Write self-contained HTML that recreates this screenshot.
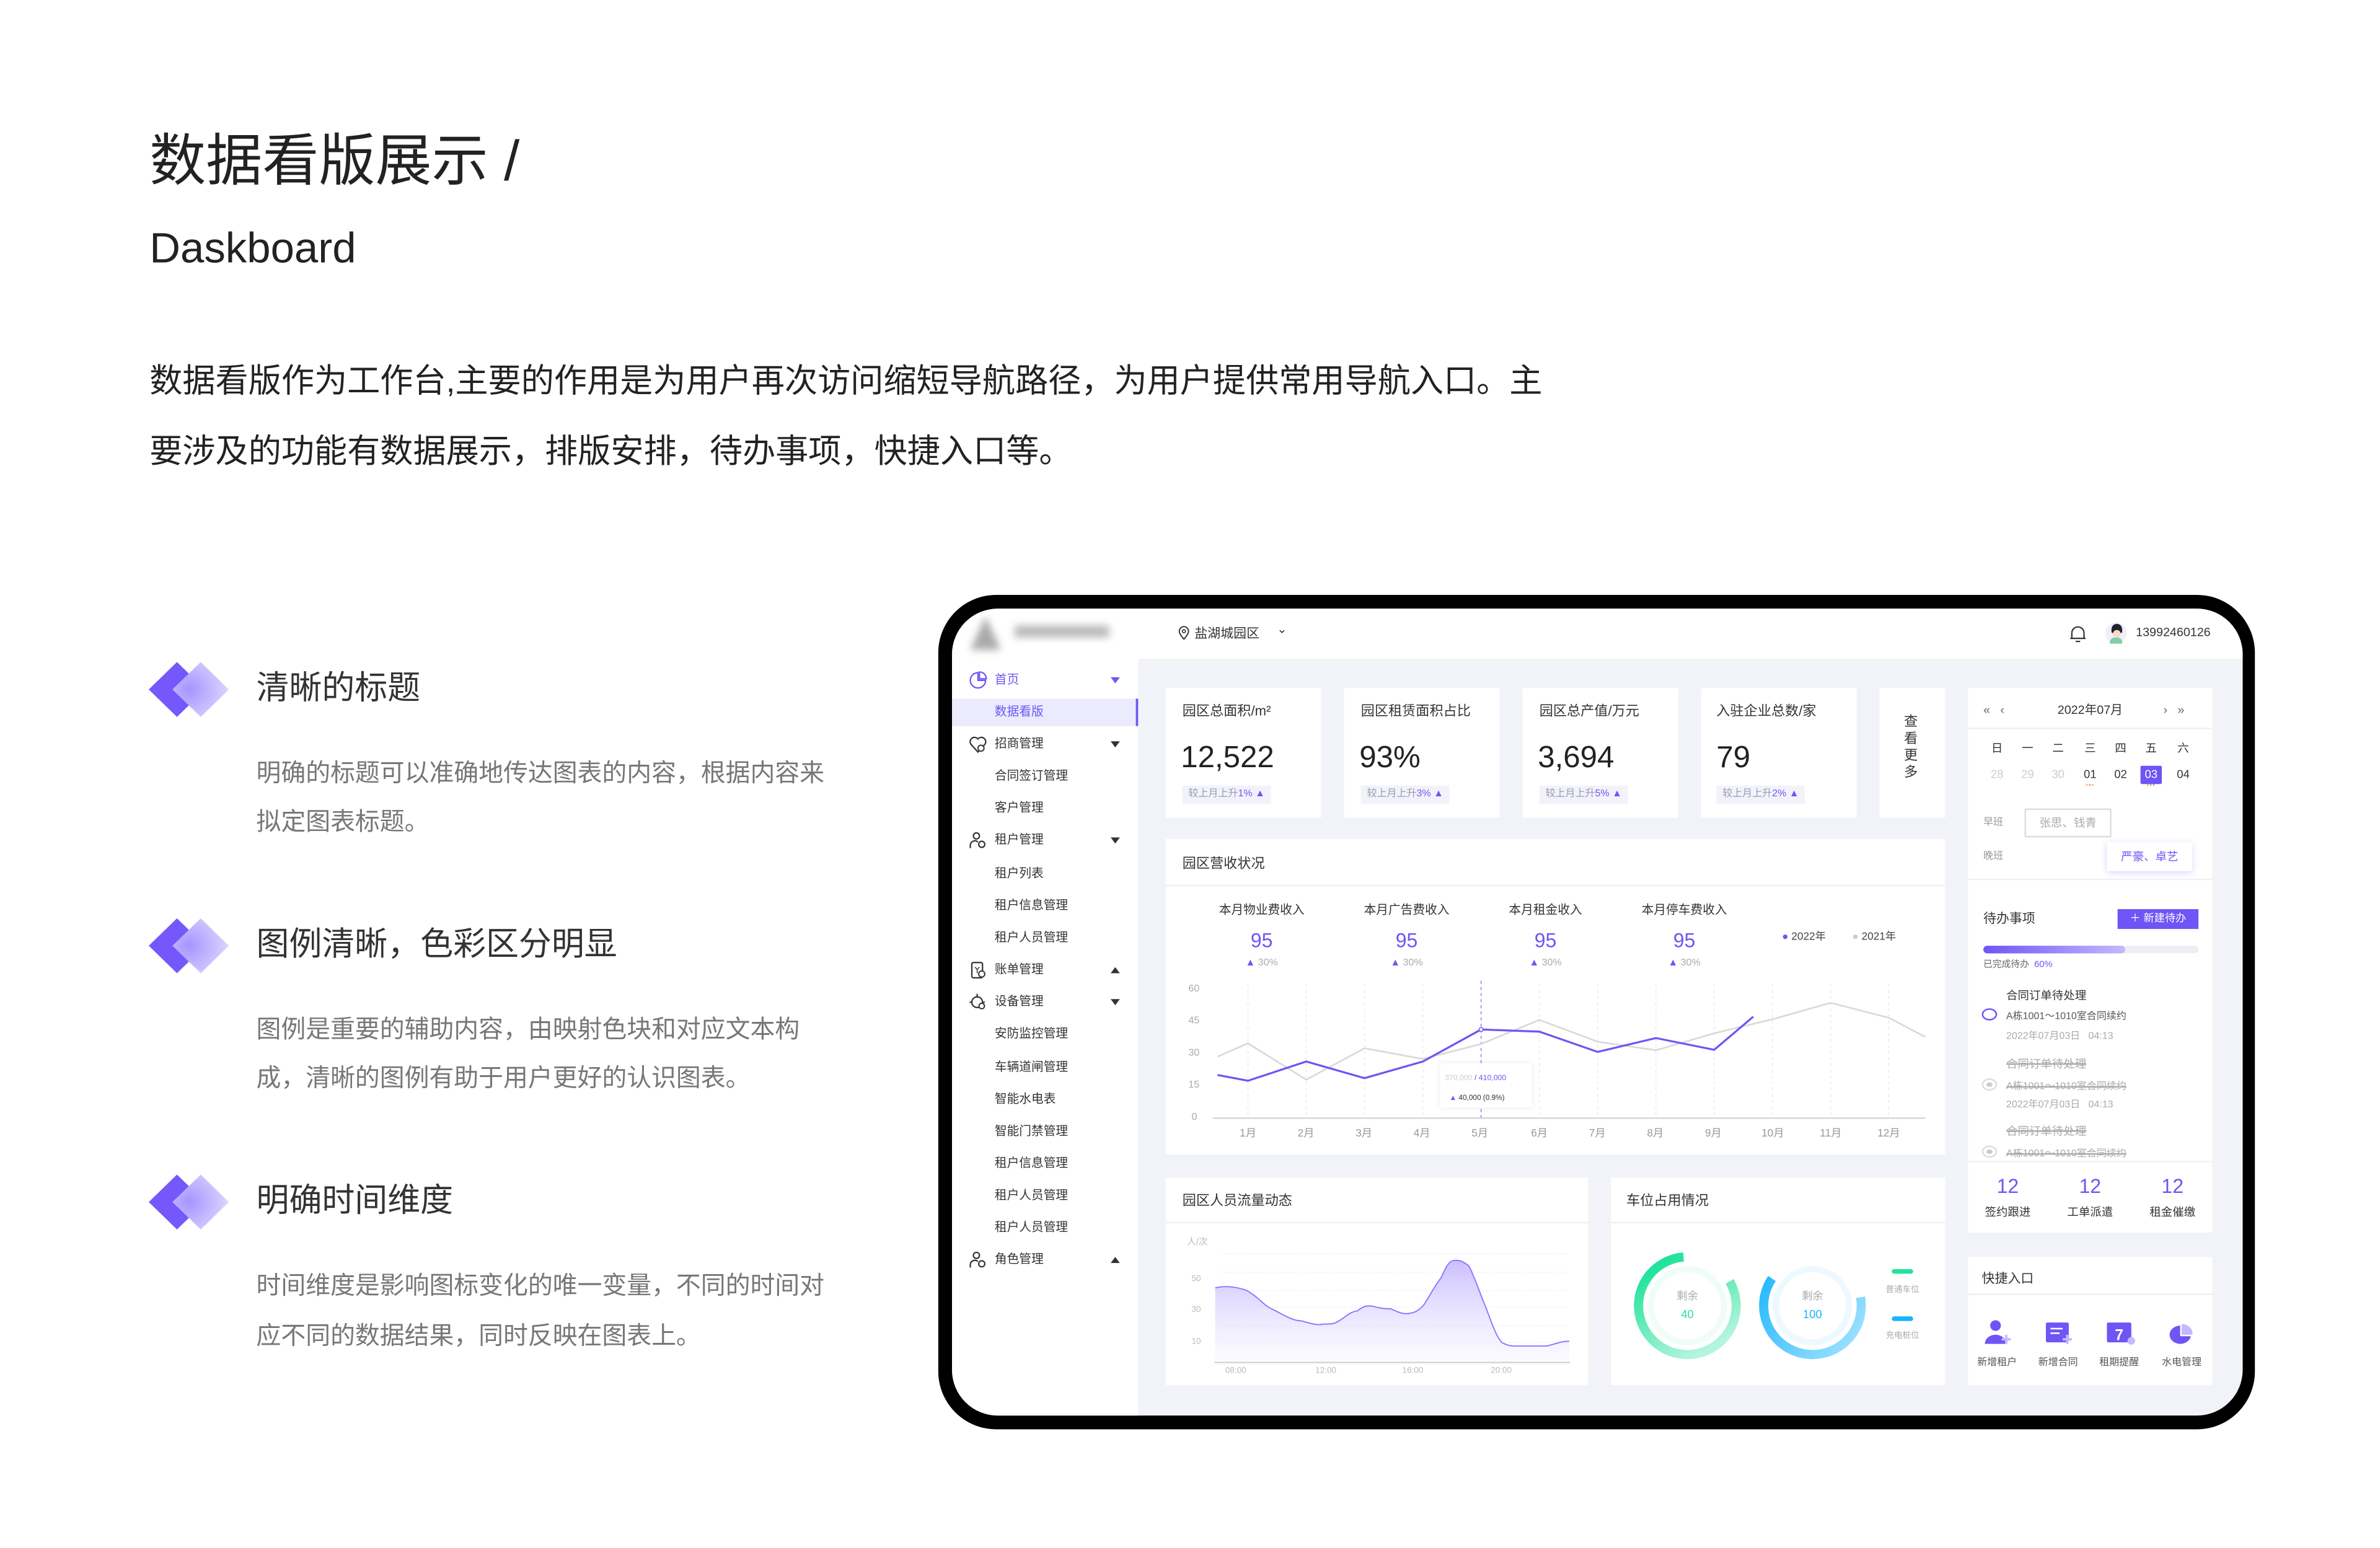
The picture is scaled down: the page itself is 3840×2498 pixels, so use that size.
<!DOCTYPE html>
<html><head><meta charset="utf-8">
<style>
*{margin:0;padding:0;box-sizing:border-box}
html,body{width:3840px;height:2498px;overflow:hidden;background:#fff}
body{font-family:"Liberation Sans","Noto Sans CJK SC",sans-serif;color:#333}
#w{position:absolute;left:0;top:0;width:1560px;height:1015px;transform:scale(2.461538);transform-origin:0 0}
.t{position:absolute;white-space:nowrap}
.c{transform:translateX(-50%)}
.card{position:absolute;background:#fff}
.sb{position:absolute;left:652px;font-size:8px;line-height:10px;color:#333}
.ar{position:absolute;left:728px;width:0;height:0;border-left:3px solid transparent;border-right:3px solid transparent}
.dn{border-top:4px solid #333}
.up{border-bottom:4px solid #333}
.badge{position:absolute;height:12px;background:#f2f2fa;font-size:6.5px;line-height:12px;color:#9a9ab0;padding:0 4px}
.badge b{color:#6e55f5;font-weight:normal}
.ft{position:absolute;left:168px;font-size:21.5px;line-height:26px;color:#333;white-space:nowrap}
.fd{position:absolute;left:168px;font-size:16.2px;line-height:20px;color:#777;white-space:nowrap}
</style></head><body>
<div id="w">
<div class="t" style="left:98px;top:84px;font-size:37px;line-height:44px;color:#222">数据看版展示 /</div>
<div class="t" style="left:98px;top:146px;font-size:28px;line-height:34px;color:#222">Daskboard</div>
<div class="t" style="left:98px;top:237px;font-size:21.6px;line-height:26px;color:#222">数据看版作为工作台,主要的作用是为用户再次访问缩短导航路径，为用户提供常用导航入口。主</div>
<div class="t" style="left:98px;top:283px;font-size:21.6px;line-height:26px;color:#222">要涉及的功能有数据展示，排版安排，待办事项，快捷入口等。</div>

<div class="ft" style="top:438px">清晰的标题</div>
<div class="fd" style="top:497px">明确的标题可以准确地传达图表的内容，根据内容来</div>
<div class="fd" style="top:529px">拟定图表标题。</div>
<div class="ft" style="top:606px">图例清晰，色彩区分明显</div>
<div class="fd" style="top:665px">图例是重要的辅助内容，由映射色块和对应文本构</div>
<div class="fd" style="top:697px">成，清晰的图例有助于用户更好的认识图表。</div>
<div class="ft" style="top:774px">明确时间维度</div>
<div class="fd" style="top:833px">时间维度是影响图标变化的唯一变量，不同的时间对</div>
<div class="fd" style="top:866px">应不同的数据结果，同时反映在图表上。</div>

<svg style="position:absolute;left:0;top:0" width="1560" height="1015" viewBox="0 0 1560 1015">
<defs>
<radialGradient id="dg" cx="0.3" cy="0.5" r="0.9"><stop offset="0" stop-color="#a595ff"/><stop offset="1" stop-color="#ece8ff"/></radialGradient>
</defs>
<g>
<polygon points="116,434 134.5,452 116,470 97.5,452" fill="#7558fb"/>
<polygon points="131.6,434 150,452 131.6,470 113,452" fill="url(#dg)"/>
<polygon points="116,602 134.5,620 116,638 97.5,620" fill="#7558fb"/>
<polygon points="131.6,602 150,620 131.6,638 113,620" fill="url(#dg)"/>
<polygon points="116,770 134.5,788 116,806 97.5,788" fill="#7558fb"/>
<polygon points="131.6,770 150,788 131.6,806 113,788" fill="url(#dg)"/>
</g>
<rect x="615" y="390" width="863" height="547" rx="38" fill="#000"/>
<rect x="624" y="399" width="846" height="529" rx="30" fill="#f2f3f8"/>
<path d="M654 399 H1440 A30 30 0 0 1 1470 429 V432 H624 V429 A30 30 0 0 1 654 399Z" fill="#fff"/>
<path d="M624 432 H746 V928 H654 A30 30 0 0 1 624 898Z" fill="#fff"/>
<rect x="624" y="458" width="122" height="18" fill="#ecebfd"/>
<rect x="744.5" y="458" width="1.5" height="18" fill="#6e55f5"/>
<g style="filter:blur(2.5px)"><polygon points="646,404 656,426 636,426" fill="#aaa"/><rect x="665" y="410" width="62" height="8" fill="#bbb"/></g>
</svg>

<svg class="t" style="left:772px;top:410px" width="8" height="10" viewBox="0 0 8 10"><path d="M4 9 C1 5.5 1 4.5 1 3.8 A3 3 0 0 1 7 3.8 C7 4.5 7 5.5 4 9Z" fill="none" stroke="#333" stroke-width="0.8"/><circle cx="4" cy="3.8" r="1" fill="none" stroke="#333" stroke-width="0.7"/></svg>
<div class="t" style="left:783px;top:410px;font-size:8.5px;line-height:10px">盐湖城园区</div>
<div class="t" style="left:837px;top:408px;font-size:8px;line-height:10px">⌄</div>
<svg class="t" style="left:1356px;top:409px" width="12" height="13" viewBox="0 0 12 13"><path d="M2 9.5 V6 A4 4 0 0 1 10 6 V9.5 Z M1 9.5 H11 M4.5 11.5 H7.5" fill="none" stroke="#333" stroke-width="0.9"/></svg>
<div class="t" style="left:1380px;top:408px;width:14px;height:14px;border-radius:50%;background:#eef0f5"></div>
<div class="t" style="left:1383.5px;top:409px;width:7px;height:6px;border-radius:4px 4px 1px 1px;background:#223"></div>
<div class="t" style="left:1384.5px;top:413px;width:5px;height:5px;border-radius:50%;background:#fcd9c3"></div>
<div class="t" style="left:1383px;top:418px;width:8px;height:4px;border-radius:3px 3px 0 0;background:#7ccfa6"></div>
<div class="t" style="left:1400px;top:410px;font-size:8px;line-height:10px;color:#333">13992460126</div>

<svg class="t" style="left:635px;top:440px" width="12" height="12" viewBox="0 0 12 12"><path d="M6 1 A5 5 0 1 0 11 6 H6Z" fill="none" stroke="#6e55f5" stroke-width="0.9"/><path d="M7 0.5 V5 H11.5 A4.5 4.5 0 0 0 7 0.5Z" fill="none" stroke="#6e55f5" stroke-width="0.9"/></svg>
<div class="sb" style="top:441px;color:#6e55f5">首页</div><div class="ar" style="top:444px;border-top:4px solid #6e55f5"></div>
<div class="sb" style="top:462px;color:#6e55f5">数据看版</div>
<svg class="t" style="left:635px;top:482px" width="12" height="12" viewBox="0 0 12 12"><path d="M6 11 L1.5 6 A2.8 2.8 0 0 1 6 2.5 A2.8 2.8 0 0 1 10.5 6Z" fill="none" stroke="#333" stroke-width="0.9"/><circle cx="8" cy="8.5" r="2" fill="#fff" stroke="#333" stroke-width="0.8"/></svg>
<div class="sb" style="top:483px">招商管理</div><div class="ar dn" style="top:486px"></div>
<div class="sb" style="top:504px">合同签订管理</div>
<div class="sb" style="top:525px">客户管理</div>
<svg class="t" style="left:635px;top:545px" width="12" height="12" viewBox="0 0 12 12"><circle cx="5" cy="3" r="2" fill="none" stroke="#333" stroke-width="0.9"/><path d="M1 11 V9 A3 3 0 0 1 6 7" fill="none" stroke="#333" stroke-width="0.9"/><circle cx="8.5" cy="8.5" r="2" fill="none" stroke="#333" stroke-width="0.9"/></svg>
<div class="sb" style="top:546px">租户管理</div><div class="ar dn" style="top:549px"></div>
<div class="sb" style="top:568px">租户列表</div>
<div class="sb" style="top:589px">租户信息管理</div>
<div class="sb" style="top:610px">租户人员管理</div>
<svg class="t" style="left:635px;top:630px" width="12" height="12" viewBox="0 0 12 12"><rect x="2" y="1" width="7" height="10" rx="1" fill="none" stroke="#333" stroke-width="0.9"/><circle cx="8.5" cy="8.5" r="2" fill="#fff" stroke="#333" stroke-width="0.8"/><path d="M4 4 L5.5 5.5 L7 4 M5.5 5.5 V8" fill="none" stroke="#333" stroke-width="0.6"/></svg>
<div class="sb" style="top:631px">账单管理</div><div class="ar up" style="top:634px"></div>
<svg class="t" style="left:635px;top:651px" width="12" height="12" viewBox="0 0 12 12"><circle cx="5.5" cy="6" r="3.5" fill="none" stroke="#333" stroke-width="0.9"/><path d="M5.5 0.5 V3 M0.5 6 H2 M9 6 H10.5" stroke="#333" stroke-width="0.9"/><circle cx="8.5" cy="8.5" r="1.8" fill="#fff" stroke="#333" stroke-width="0.8"/></svg>
<div class="sb" style="top:652px">设备管理</div><div class="ar dn" style="top:655px"></div>
<div class="sb" style="top:673px">安防监控管理</div>
<div class="sb" style="top:695px">车辆道闸管理</div>
<div class="sb" style="top:716px">智能水电表</div>
<div class="sb" style="top:737px">智能门禁管理</div>
<div class="sb" style="top:758px">租户信息管理</div>
<div class="sb" style="top:779px">租户人员管理</div>
<div class="sb" style="top:800px">租户人员管理</div>
<svg class="t" style="left:635px;top:820px" width="12" height="12" viewBox="0 0 12 12"><circle cx="5" cy="3" r="2" fill="none" stroke="#333" stroke-width="0.9"/><path d="M1 11 V9 A3 3 0 0 1 6 7" fill="none" stroke="#333" stroke-width="0.9"/><circle cx="8.5" cy="8.5" r="2" fill="none" stroke="#333" stroke-width="0.9"/></svg>
<div class="sb" style="top:821px">角色管理</div><div class="ar up" style="top:824px"></div>

<div class="card" style="left:764px;top:451px;width:102px;height:85px"></div>
<div class="card" style="left:881px;top:451px;width:102px;height:85px"></div>
<div class="card" style="left:998px;top:451px;width:102px;height:85px"></div>
<div class="card" style="left:1115px;top:451px;width:102px;height:85px"></div>
<div class="card" style="left:1232px;top:451px;width:43px;height:85px"></div>
<div class="t" style="left:775px;top:461px;font-size:9px;line-height:11px">园区总面积/m²</div>
<div class="t" style="left:892px;top:461px;font-size:9px;line-height:11px">园区租赁面积占比</div>
<div class="t" style="left:1009px;top:461px;font-size:9px;line-height:11px">园区总产值/万元</div>
<div class="t" style="left:1125px;top:461px;font-size:9px;line-height:11px">入驻企业总数/家</div>
<div class="t" style="left:774px;top:485px;font-size:20px;line-height:24px;color:#222">12,522</div>
<div class="t" style="left:891px;top:485px;font-size:20px;line-height:24px;color:#222">93%</div>
<div class="t" style="left:1008px;top:485px;font-size:20px;line-height:24px;color:#222">3,694</div>
<div class="t" style="left:1125px;top:485px;font-size:20px;line-height:24px;color:#222">79</div>
<div class="badge" style="left:775px;top:515px">较上月上升<b>1%</b> <b>▲</b></div>
<div class="badge" style="left:892px;top:515px">较上月上升<b>3%</b> <b>▲</b></div>
<div class="badge" style="left:1009px;top:515px">较上月上升<b>5%</b> <b>▲</b></div>
<div class="badge" style="left:1125px;top:515px">较上月上升<b>2%</b> <b>▲</b></div>
<div class="t" style="left:1248px;top:468px;font-size:9px;line-height:11px;width:10px;white-space:normal">查看更多</div>

<div class="card" style="left:764px;top:550px;width:511px;height:207px"></div>
<div class="t" style="left:764px;top:580px;width:511px;height:1px;background:#f0f0f4"></div>
<div class="t" style="left:775px;top:561px;font-size:9px;line-height:11px">园区营收状况</div>
<div class="t c" style="left:827px;top:592px;font-size:8px;line-height:10px">本月物业费收入</div>
<div class="t c" style="left:922px;top:592px;font-size:8px;line-height:10px">本月广告费收入</div>
<div class="t c" style="left:1013px;top:592px;font-size:8px;line-height:10px">本月租金收入</div>
<div class="t c" style="left:1104px;top:592px;font-size:8px;line-height:10px">本月停车费收入</div>
<div class="t c" style="left:827px;top:609px;font-size:13px;line-height:15px;color:#6e55f5">95</div>
<div class="t c" style="left:922px;top:609px;font-size:13px;line-height:15px;color:#6e55f5">95</div>
<div class="t c" style="left:1013px;top:609px;font-size:13px;line-height:15px;color:#6e55f5">95</div>
<div class="t c" style="left:1104px;top:609px;font-size:13px;line-height:15px;color:#6e55f5">95</div>
<div class="t c" style="left:827px;top:628px;font-size:6.5px;line-height:8px;color:#aaa"><span style="color:#6e55f5">▲</span> 30%</div>
<div class="t c" style="left:922px;top:628px;font-size:6.5px;line-height:8px;color:#aaa"><span style="color:#6e55f5">▲</span> 30%</div>
<div class="t c" style="left:1013px;top:628px;font-size:6.5px;line-height:8px;color:#aaa"><span style="color:#6e55f5">▲</span> 30%</div>
<div class="t c" style="left:1104px;top:628px;font-size:6.5px;line-height:8px;color:#aaa"><span style="color:#6e55f5">▲</span> 30%</div>
<div class="t" style="left:1168px;top:610px;font-size:7px;line-height:9px;color:#444"><span style="color:#6e55f5">●</span> 2022年</div>
<div class="t" style="left:1214px;top:610px;font-size:7px;line-height:9px;color:#444"><span style="color:#ccc">●</span> 2021年</div>
<div class="t" style="left:779px;top:645px;font-size:6.5px;line-height:8px;color:#aaa">60</div>
<div class="t" style="left:779px;top:666px;font-size:6.5px;line-height:8px;color:#aaa">45</div>
<div class="t" style="left:779px;top:687px;font-size:6.5px;line-height:8px;color:#aaa">30</div>
<div class="t" style="left:779px;top:708px;font-size:6.5px;line-height:8px;color:#aaa">15</div>
<div class="t" style="left:781px;top:729px;font-size:6.5px;line-height:8px;color:#aaa">0</div>
<div class="t c" style="left:818px;top:739px;font-size:7px;line-height:9px;color:#999">1月</div>
<div class="t c" style="left:856px;top:739px;font-size:7px;line-height:9px;color:#999">2月</div>
<div class="t c" style="left:894px;top:739px;font-size:7px;line-height:9px;color:#999">3月</div>
<div class="t c" style="left:932px;top:739px;font-size:7px;line-height:9px;color:#999">4月</div>
<div class="t c" style="left:970px;top:739px;font-size:7px;line-height:9px;color:#999">5月</div>
<div class="t c" style="left:1009px;top:739px;font-size:7px;line-height:9px;color:#999">6月</div>
<div class="t c" style="left:1047px;top:739px;font-size:7px;line-height:9px;color:#999">7月</div>
<div class="t c" style="left:1085px;top:739px;font-size:7px;line-height:9px;color:#999">8月</div>
<div class="t c" style="left:1123px;top:739px;font-size:7px;line-height:9px;color:#999">9月</div>
<div class="t c" style="left:1162px;top:739px;font-size:7px;line-height:9px;color:#999">10月</div>
<div class="t c" style="left:1200px;top:739px;font-size:7px;line-height:9px;color:#999">11月</div>
<div class="t c" style="left:1238px;top:739px;font-size:7px;line-height:9px;color:#999">12月</div>

<div class="card" style="left:764px;top:772px;width:277px;height:136px"></div>
<div class="card" style="left:1056px;top:772px;width:219px;height:136px"></div>
<div class="t" style="left:764px;top:801px;width:277px;height:1px;background:#f0f0f4"></div>
<div class="t" style="left:1056px;top:801px;width:219px;height:1px;background:#f0f0f4"></div>
<div class="t" style="left:775px;top:782px;font-size:9px;line-height:11px">园区人员流量动态</div>
<div class="t" style="left:1066px;top:782px;font-size:9px;line-height:11px">车位占用情况</div>
<div class="t" style="left:778px;top:811px;font-size:6px;line-height:8px;color:#bbb">人/次</div>
<div class="t" style="left:781px;top:836px;font-size:5.5px;line-height:7px;color:#bbb">50</div>
<div class="t" style="left:781px;top:856px;font-size:5.5px;line-height:7px;color:#bbb">30</div>
<div class="t" style="left:781px;top:877px;font-size:5.5px;line-height:7px;color:#bbb">10</div>
<div class="t c" style="left:810px;top:896px;font-size:5.5px;line-height:7px;color:#bbb">08:00</div>
<div class="t c" style="left:869px;top:896px;font-size:5.5px;line-height:7px;color:#bbb">12:00</div>
<div class="t c" style="left:926px;top:896px;font-size:5.5px;line-height:7px;color:#bbb">16:00</div>
<div class="t c" style="left:984px;top:896px;font-size:5.5px;line-height:7px;color:#bbb">20:00</div>

<div class="card" style="left:1290px;top:451px;width:160px;height:357px"></div>
<div class="card" style="left:1290px;top:824px;width:160px;height:84px"></div>
<div class="t" style="left:1300px;top:461px;font-size:8px;line-height:10px;color:#666">«&nbsp;&nbsp;&nbsp;‹</div>
<div class="t c" style="left:1370px;top:461px;font-size:8px;line-height:10px;color:#333">2022年07月</div>
<div class="t" style="left:1418px;top:461px;font-size:8px;line-height:10px;color:#666">›&nbsp;&nbsp;&nbsp;»</div>
<div class="t" style="left:1290px;top:477px;width:160px;height:1px;background:#f0f0f4"></div>
<div class="t c" style="left:1309px;top:486px;font-size:7.5px;line-height:10px">日</div>
<div class="t c" style="left:1329px;top:486px;font-size:7.5px;line-height:10px">一</div>
<div class="t c" style="left:1349px;top:486px;font-size:7.5px;line-height:10px">二</div>
<div class="t c" style="left:1370px;top:486px;font-size:7.5px;line-height:10px">三</div>
<div class="t c" style="left:1390px;top:486px;font-size:7.5px;line-height:10px">四</div>
<div class="t c" style="left:1410px;top:486px;font-size:7.5px;line-height:10px">五</div>
<div class="t c" style="left:1431px;top:486px;font-size:7.5px;line-height:10px">六</div>
<div class="t c" style="left:1309px;top:503px;font-size:7.5px;line-height:10px;color:#ccc">28</div>
<div class="t c" style="left:1329px;top:503px;font-size:7.5px;line-height:10px;color:#ccc">29</div>
<div class="t c" style="left:1349px;top:503px;font-size:7.5px;line-height:10px;color:#ccc">30</div>
<div class="t c" style="left:1370px;top:503px;font-size:7.5px;line-height:10px">01</div>
<div class="t c" style="left:1390px;top:503px;font-size:7.5px;line-height:10px">02</div>
<div class="t" style="left:1403px;top:502px;width:14px;height:12px;background:#6e55f5;border-radius:1px"></div>
<div class="t c" style="left:1410px;top:503px;font-size:7.5px;line-height:10px;color:#fff">03</div>
<div class="t c" style="left:1431px;top:503px;font-size:7.5px;line-height:10px">04</div>
<div class="t c" style="left:1370px;top:513px;font-size:4px;line-height:4px;letter-spacing:0.5px"><span style="color:#f5a623">•</span><span style="color:#ff5fb0">•</span><span style="color:#f5a623">•</span></div>
<div class="t c" style="left:1410px;top:513px;font-size:4px;line-height:4px;letter-spacing:0.5px"><span style="color:#f5a623">•</span><span style="color:#7ed321">•</span><span style="color:#ff5fb0">•</span></div>
<div class="t" style="left:1300px;top:536px;font-size:6.5px;line-height:8px;color:#999">早班</div>
<div class="t" style="left:1327px;top:530px;width:57px;height:19px;border:1px solid #ddd;border-radius:1px;font-size:7.5px;line-height:17px;text-align:center;color:#aaa">张思、钱青</div>
<div class="t" style="left:1300px;top:558px;font-size:6.5px;line-height:8px;color:#999">晚班</div>
<div class="t" style="left:1381px;top:552px;width:56px;height:19px;background:#fff;box-shadow:0 1px 4px rgba(110,85,245,0.25);font-size:7.5px;line-height:19px;text-align:center;color:#6e55f5">严豪、卓艺</div>
<div class="t" style="left:1290px;top:576px;width:160px;height:1px;background:#f0f0f4"></div>
<div class="t" style="left:1300px;top:597px;font-size:8.5px;line-height:10px;color:#333">待办事项</div>
<div class="t" style="left:1388px;top:596px;width:53px;height:13px;background:#6e55f5;color:#fff;font-size:7px;line-height:13px;text-align:center">＋ 新建待办</div>
<div class="t" style="left:1300px;top:620px;width:141px;height:5px;border-radius:3px;background:#eeeef4"></div>
<div class="t" style="left:1300px;top:620px;width:93px;height:5px;border-radius:3px;background:linear-gradient(90deg,#6e55f5,#c5b8ff)"></div>
<div class="t" style="left:1300px;top:629px;font-size:6px;line-height:8px;color:#666">已完成待办&nbsp;&nbsp;<span style="color:#6e55f5">60%</span></div>
<div class="t" style="left:1315px;top:648px;font-size:7.5px;line-height:10px">合同订单待处理</div>
<div class="t" style="left:1299px;top:661px;width:10px;height:8px;border:1px solid #6e55f5;border-radius:50%"></div>
<div class="t" style="left:1315px;top:663px;font-size:6.5px;line-height:8px;color:#555">A栋1001～1010室合同续约</div>
<div class="t" style="left:1315px;top:676px;font-size:6.5px;line-height:8px;color:#aaa">2022年07月03日&nbsp;&nbsp;&nbsp;04:13</div>
<div class="t" style="left:1315px;top:693px;font-size:7.5px;line-height:10px;color:#aaa;text-decoration:line-through">合同订单待处理</div>
<div class="t" style="left:1299px;top:707px;width:10px;height:8px;border:1px solid #ddd;border-radius:50%;background:radial-gradient(#ccc 30%,#fff 40%)"></div>
<div class="t" style="left:1315px;top:709px;font-size:6.5px;line-height:8px;color:#aaa;text-decoration:line-through">A栋1001～1010室合同续约</div>
<div class="t" style="left:1315px;top:721px;font-size:6.5px;line-height:8px;color:#aaa">2022年07月03日&nbsp;&nbsp;&nbsp;04:13</div>
<div class="t" style="left:1315px;top:737px;font-size:7.5px;line-height:10px;color:#aaa;text-decoration:line-through">合同订单待处理</div>
<div class="t" style="left:1299px;top:751px;width:10px;height:8px;border:1px solid #ddd;border-radius:50%;background:radial-gradient(#ccc 30%,#fff 40%)"></div>
<div class="t" style="left:1315px;top:753px;height:7px;overflow:hidden;font-size:6.5px;line-height:8px;color:#aaa;text-decoration:line-through">A栋1001～1010室合同续约</div>
<div class="t" style="left:1290px;top:761px;width:160px;height:1px;background:#f0f0f4"></div>
<div class="t c" style="left:1316px;top:770px;font-size:13px;line-height:15px;color:#6e55f5">12</div>
<div class="t c" style="left:1370px;top:770px;font-size:13px;line-height:15px;color:#6e55f5">12</div>
<div class="t c" style="left:1424px;top:770px;font-size:13px;line-height:15px;color:#6e55f5">12</div>
<div class="t c" style="left:1316px;top:790px;font-size:7.5px;line-height:10px">签约跟进</div>
<div class="t c" style="left:1370px;top:790px;font-size:7.5px;line-height:10px">工单派遣</div>
<div class="t c" style="left:1424px;top:790px;font-size:7.5px;line-height:10px">租金催缴</div>
<div class="t" style="left:1299px;top:833px;font-size:8.5px;line-height:10px">快捷入口</div>
<div class="t" style="left:1290px;top:848px;width:160px;height:1px;background:#f0f0f4"></div>
<div class="t c" style="left:1309px;top:890px;font-size:6.5px;line-height:8px;color:#555">新增租户</div>
<div class="t c" style="left:1349px;top:890px;font-size:6.5px;line-height:8px;color:#555">新增合同</div>
<div class="t c" style="left:1389px;top:890px;font-size:6.5px;line-height:8px;color:#555">租期提醒</div>
<div class="t c" style="left:1430px;top:890px;font-size:6.5px;line-height:8px;color:#555">水电管理</div>

<svg style="position:absolute;left:0;top:0" width="1560" height="1015" viewBox="0 0 1560 1015">
<defs>
<linearGradient id="gg2" x1="0" y1="0" x2="0" y2="1"><stop offset="0" stop-color="#22e39a"/><stop offset="1" stop-color="#b5f5de"/></linearGradient>
<linearGradient id="bg3" x1="0" y1="0" x2="1" y2="1"><stop offset="0" stop-color="#1ab4ff"/><stop offset="1" stop-color="#a8e5ff"/></linearGradient>
<linearGradient id="ag2" x1="0" y1="0" x2="0" y2="1"><stop offset="0" stop-color="#b9a8ff" stop-opacity="0.75"/><stop offset="1" stop-color="#f2efff" stop-opacity="0.3"/></linearGradient>
</defs>
<g stroke="#e6e6ee" stroke-width="0.5" stroke-dasharray="2 2">
<path d="M818 645V733M856.2 645V733M894.4 645V733M932.6 645V733M1009 645V733M1047.2 645V733M1085.4 645V733M1123.6 645V733M1161.8 645V733M1200 645V733M1238 645V733"/>
</g>
<path d="M970.8 643V733" stroke="#8f7bff" stroke-width="0.6" stroke-dasharray="2 2"/>
<path d="M795 733H1262" stroke="#ccc" stroke-width="0.8"/>
<polyline fill="none" stroke="#d9d9d9" stroke-width="1.1" points="798,692.7 818,684 856.2,707.8 894.4,687.2 932.6,694.2 970.8,684.4 1009,668.6 1047.2,682.9 1085.4,688.5 1123.6,677.4 1161.8,668.2 1200,657.4 1238,667.2 1262,679.8"/>
<polyline fill="none" stroke="#6e55f5" stroke-width="1.3" points="798,704.7 818,708.5 856.2,695.9 894.4,706.8 932.6,695.9 970.8,674.9 1009,676.3 1047.2,689.6 1085.4,680.5 1123.6,688.2 1149.2,666.5"/>
<circle cx="970.8" cy="674.9" r="1.3" fill="#fff" stroke="#6e55f5" stroke-width="0.6"/>
<rect x="944" y="697" width="60" height="29" fill="#fff" style="filter:drop-shadow(0 0 2px rgba(0,0,0,0.08))"/>
<text x="947" y="708" font-size="5" fill="#ccc" font-family="Liberation Sans">370,000 <tspan fill="#6e55f5">/ 410,000</tspan></text>
<text x="950" y="721" font-size="4.8" fill="#333" font-family="Liberation Sans"><tspan fill="#6e55f5">▲</tspan> 40,000 (0.9%)</text>
<g stroke="#eeeef5" stroke-width="0.5" stroke-dasharray="1.5 1.5"><path d="M800 822H1028M800 834H1028M800 846H1028M800 857H1028M800 869H1028M800 880H1028"/></g>
<path d="M796.5 844.3 C802 843 808 843 816.6 845.7 C825 850 828 856 834.9 858.7 C843 863 848 866 853.1 865.9 C860 868 864 869 867.7 868 C871 868 873 868 875.1 867.3 C882 864 884 860 889.7 859.4 C895 855 898 856 900.6 856.5 C906 858 908 858 911.6 858 C916 860 920 862 924.4 860.9 C929 860 931 858 933.5 855.1 C938 848 941 842 944.5 837.8 C948 830 950 826 953.6 826.3 C957 826 959 827 962.8 829.9 C967 838 970 848 973.7 856.5 C978 868 981 877 984.7 880.3 C988 882 990 882.4 992 882.4 L1013.9 882.4 C1020 881 1024 879 1028.6 879.3 L1028.6 893 L796.5 893Z" fill="url(#ag2)"/>
<path d="M796.5 844.3 C802 843 808 843 816.6 845.7 C825 850 828 856 834.9 858.7 C843 863 848 866 853.1 865.9 C860 868 864 869 867.7 868 C871 868 873 868 875.1 867.3 C882 864 884 860 889.7 859.4 C895 855 898 856 900.6 856.5 C906 858 908 858 911.6 858 C916 860 920 862 924.4 860.9 C929 860 931 858 933.5 855.1 C938 848 941 842 944.5 837.8 C948 830 950 826 953.6 826.3 C957 826 959 827 962.8 829.9 C967 838 970 848 973.7 856.5 C978 868 981 877 984.7 880.3 C988 882 990 882.4 992 882.4 L1013.9 882.4 C1020 881 1024 879 1028.6 879.3" fill="none" stroke="#8f78ff" stroke-width="0.8"/>
<path d="M796 893.2H1029" stroke="#ccc" stroke-width="0.8"/>
<circle cx="1106" cy="856" r="24" fill="#fff" stroke="#effcf7" stroke-width="4"/>
<circle cx="1106" cy="856" r="32" fill="none" stroke="url(#gg2)" stroke-width="6" stroke-dasharray="165 40" transform="rotate(-30 1106 856)"/>
<circle cx="1188" cy="856" r="24" fill="#fff" stroke="#eef8ff" stroke-width="4"/>
<circle cx="1188" cy="856" r="32" fill="none" stroke="url(#bg3)" stroke-width="6" stroke-dasharray="125 80" transform="rotate(-10 1188 856)"/>
<text x="1106" y="852" font-size="7" fill="#aaa" text-anchor="middle" font-family="Liberation Sans,Noto Sans CJK SC">剩余</text>
<text x="1106" y="864" font-size="7.5" fill="#2ddf9c" text-anchor="middle" font-family="Liberation Sans">40</text>
<text x="1188" y="852" font-size="7" fill="#aaa" text-anchor="middle" font-family="Liberation Sans,Noto Sans CJK SC">剩余</text>
<text x="1188" y="864" font-size="7.5" fill="#1ab4ff" text-anchor="middle" font-family="Liberation Sans">100</text>
<rect x="1240" y="832" width="14" height="3" rx="1.5" fill="#22e39a"/>
<rect x="1240" y="863" width="14" height="3" rx="1.5" fill="#1ab4ff"/>
<text x="1247" y="847" font-size="5.5" fill="#aaa" text-anchor="middle" font-family="Liberation Sans,Noto Sans CJK SC">普通车位</text>
<text x="1247" y="877" font-size="5.5" fill="#aaa" text-anchor="middle" font-family="Liberation Sans,Noto Sans CJK SC">充电桩位</text>
<circle cx="1308" cy="869" r="3.5" fill="#6e55f5"/><path d="M1301 881 A7 6 0 0 1 1315 881Z" fill="#6e55f5"/><path d="M1312 878H1318M1315 875V881" stroke="#c5b8ff" stroke-width="1.6"/>
<rect x="1341" y="867" width="15" height="13" rx="1" fill="#6e55f5"/><path d="M1344 871H1352M1344 874H1350" stroke="#fff" stroke-width="1"/><path d="M1352 878H1358M1355 875V881" stroke="#c5b8ff" stroke-width="1.6"/>
<rect x="1381" y="867" width="16" height="13" rx="1" fill="#6e55f5"/><text x="1389" y="878.5" font-size="10" fill="#fff" text-anchor="middle" font-family="Liberation Sans" font-weight="bold">7</text><circle cx="1397" cy="879" r="2.5" fill="#c5b8ff"/>
<path d="M1430 875 L1430 868 A7 6 0 0 1 1437 875Z" fill="#c5b8ff"/><path d="M1429 876 V869 A7 6 0 1 0 1436 876Z" fill="#6e55f5"/>
</svg>
</div>
</body></html>
